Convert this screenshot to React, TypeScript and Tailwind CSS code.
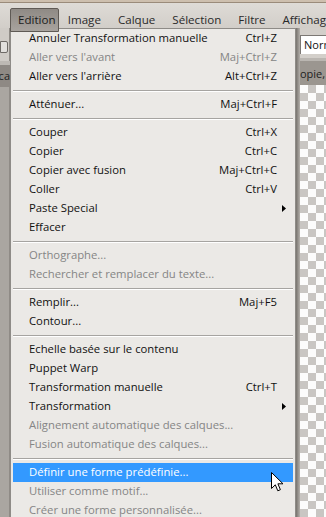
import React from 'react'

type Row =
  | { label: string; shortcut?: string; disabled?: boolean; sub?: boolean; active?: boolean }
  | 'sep'

const rows: Row[] = [
  { label: 'Annuler Transformation manuelle', shortcut: 'Ctrl+Z' },
  { label: "Aller vers l'avant", shortcut: 'Maj+Ctrl+Z', disabled: true },
  { label: "Aller vers l'arrière", shortcut: 'Alt+Ctrl+Z' },
  'sep',
  { label: 'Atténuer...', shortcut: 'Maj+Ctrl+F' },
  'sep',
  { label: 'Couper', shortcut: 'Ctrl+X' },
  { label: 'Copier', shortcut: 'Ctrl+C' },
  { label: 'Copier avec fusion', shortcut: 'Maj+Ctrl+C' },
  { label: 'Coller', shortcut: 'Ctrl+V' },
  { label: 'Paste Special', sub: true },
  { label: 'Effacer' },
  'sep',
  { label: 'Orthographe...', disabled: true },
  { label: 'Rechercher et remplacer du texte...', disabled: true },
  'sep',
  { label: 'Remplir...', shortcut: 'Maj+F5' },
  { label: 'Contour...' },
  'sep',
  { label: 'Echelle basée sur le contenu' },
  { label: 'Puppet Warp' },
  { label: 'Transformation manuelle', shortcut: 'Ctrl+T' },
  { label: 'Transformation', sub: true },
  { label: 'Alignement automatique des calques...', disabled: true },
  { label: 'Fusion automatique des calques...', disabled: true },
  'sep',
  { label: 'Définir une forme prédéfinie...', active: true },
  { label: 'Utiliser comme motif...', disabled: true },
  { label: 'Créer une forme personnalisée...', disabled: true },
]

// mouse pointer over the highlighted item
function Cursor() {
  return (
    <svg width="14" height="21" viewBox="0 0 14 21" className="absolute left-[258px] top-[9px]">
      <path
        d="M0.5 0.5 L0.5 16.5 L4.3 12.8 L6.8 18.8 L9.4 17.7 L6.9 11.8 L12 11.8 Z"
        fill="#ffffff"
        stroke="#000000"
        strokeWidth="1"
      />
    </svg>
  )
}

export default function App() {
  return (
    <div
      className="w-[326px] h-[517px] overflow-hidden bg-[#aba7a2] flex flex-col text-[11.3px] text-[#111]"
      style={{ fontFamily: '"Open Sans", "Noto Sans", sans-serif' }}
    >
      <div className="h-[3px] bg-[#cdbfae] border-b border-[#9a8b7a] shrink-0" />

      {/* menubar */}
      <div className="h-[25px] shrink-0 bg-gradient-to-b from-[#dedbd6] to-[#d2cec9] flex items-start pt-[5px] text-[11.6px] text-[#2a2a2a]">
        <div className="ml-[10px] relative z-10 h-[24px] w-[51px] pl-[7px] flex items-center border border-[#5f5a55] rounded-t-[2px] bg-gradient-to-b from-[#8f8a85] to-[#a8a39e] text-[#1c1c1c]">
          Edition
        </div>
        <div className="flex h-[24px] items-center gap-[17px] ml-[9px] whitespace-nowrap">
          <span>Image</span>
          <span>Calque</span>
          <span>Sélection</span>
          <span>Filtre</span>
          <span>Affichag</span>
        </div>
      </div>

      <div className="flex flex-1 min-h-0">
        {/* left panel */}
        <div className="w-[10px] shrink-0 flex flex-col">
          <div className="h-[33px] bg-[#cfcbc6] border-r border-[#8f8b86] flex items-center">
            <div className="w-[8px] h-[12px] border border-[#6e6a66] bg-[#e2e0dd] rounded-r-[2px] mt-[4px]" />
          </div>
          <div className="h-[4px] bg-[#bdb9b4]" />
          <div className="h-[22px] bg-[#8e8984] text-[#222] text-[11px] leading-[22px] overflow-hidden whitespace-nowrap flex justify-end">
            ca
          </div>
          <div className="flex-1 bg-[#aaa6a1] border-r border-[#8f8b86]" />
        </div>

        {/* menu */}
        <div className="relative w-[286px] shrink-0 bg-[#ebe9e6] border-l border-t border-r border-[#8e8b87] flex flex-col">
          {rows.map((r, i) =>
            r === 'sep' ? (
              <div key={i} className="h-[9px] shrink-0 flex flex-col justify-center px-[2px]">
                <div className="h-px bg-[#a6a4a1]" />
                <div className="h-px bg-[#ffffff]" />
              </div>
            ) : (
              <div key={i} className="h-[19px] shrink-0 px-[2px]">
                <div
                  className={`relative h-full flex items-center justify-between pl-[16px] pr-[16px] whitespace-nowrap ${
                    r.active
                      ? 'bg-[#3399ff] text-white'
                      : r.disabled
                        ? 'text-[#858585]'
                        : 'text-[#111]'
                  }`}
                >
                  <span>{r.label}</span>
                  {r.shortcut && <span>{r.shortcut}</span>}
                  {r.sub && (
                    <svg width="4" height="7" viewBox="0 0 4 7" className="absolute right-[7px] top-[6px]">
                      <path d="M0 0 L4 3.5 L0 7 Z" fill="#000" />
                    </svg>
                  )}
                  {r.active && <Cursor />}
                </div>
              </div>
            ),
          )}
        </div>

        {/* right side */}
        <div className="flex flex-1 min-w-0">
          <div className="w-[4px] shrink-0 bg-gradient-to-r from-[#77736e] to-[#b4b0ab]" />
          <div className="flex-1 min-w-0 flex flex-col">
            <div className="h-[30px] bg-[#d3cfca] flex items-center pt-[2px]">
              <div className="h-[19px] flex-1 bg-white border-t border-l border-[#7c7874] text-[11px] leading-[18px] pl-[3px] text-[#111] overflow-hidden whitespace-nowrap">
                Norm
              </div>
            </div>
            <div className="h-[3px] bg-[#bab6b1]" />
            <div className="h-[24px] bg-[#9b9690] text-[#1e1e1e] text-[11px] leading-[26px] overflow-hidden whitespace-nowrap">
              opie, F
            </div>
            <div className="flex-1 bg-[image:repeating-conic-gradient(#c9c6c3_0_25%,#fcfcfc_0_50%)] bg-[length:16px_16px]" />
          </div>
        </div>
      </div>
    </div>
  )
}
